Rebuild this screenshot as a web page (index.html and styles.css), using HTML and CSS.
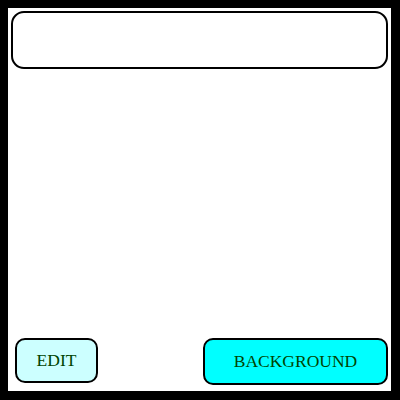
FILE: index.html
```html
<!DOCTYPE html>
<html>
<head>
<meta charset="utf-8">
<link rel="stylesheet" href="styles.css">
</head>
<body>
<div class="frame">
  <div class="panel"></div>
  <div class="spacer"></div>
  <div class="actions">
    <button class="btn btn-edit">EDIT</button>
    <button class="btn btn-bg">BACKGROUND</button>
  </div>
</div>
</body>
</html>
```
FILE: styles.css
```css
html, body {
  margin: 0;
  padding: 0;
  background: #fff;
}
.frame {
  box-sizing: border-box;
  width: 400px;
  height: 400px;
  border-style: solid;
  border-color: #000;
  border-width: 8px 9px 9px 8px;
  background: #fff;
  display: flex;
  flex-direction: column;
  padding: 3px 3px 0 3px;
}
.panel {
  box-sizing: border-box;
  height: 58px;
  border: 2px solid #000;
  border-radius: 13px;
  background: #fff;
}
.spacer {
  flex: 1;
}
.actions {
  display: flex;
  justify-content: space-between;
  align-items: flex-start;
  padding: 0 0 6px 4px;
}
.btn {
  box-sizing: border-box;
  border: 2px solid #000;
  border-radius: 10px;
  font-family: "Liberation Serif", "Times New Roman", serif;
  font-size: 17.5px;
  color: #004400;
  padding: 0;
  margin: 0;
}
.btn-edit {
  width: 83px;
  height: 45px;
  background: #ccffff;
}
.btn-bg {
  width: 185px;
  height: 47px;
  background: #00ffff;
}
```
